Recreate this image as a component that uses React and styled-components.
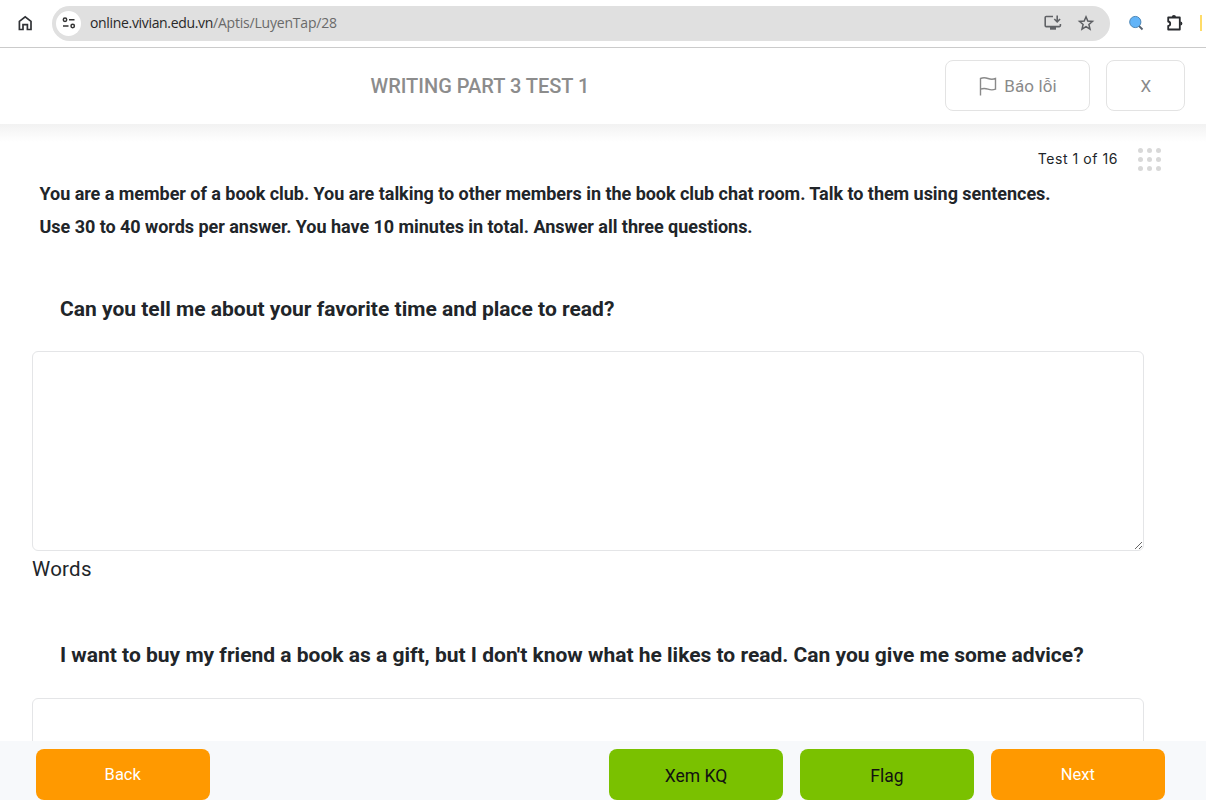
import React from "react";
import styled, { createGlobalStyle } from "styled-components";

const GlobalStyle = createGlobalStyle`
  * {
    box-sizing: border-box;
  }

  body {
    margin: 0;
    background: #fff;
    color: #212529;
    font-family: Roboto, "Liberation Sans", sans-serif;
    overflow: hidden;
  }
`;

const Page = styled.div`
  display: flex;
  flex-direction: column;
  height: 800px;
  overflow: hidden;
`;

const BrowserBar = styled.div`
  display: flex;
  align-items: center;
  flex: none;
  height: 48px;
  padding: 0 0 1px 16px;
  border-bottom: 1px solid #cbcbcb;
`;

const AddressBar = styled.div`
  display: flex;
  align-items: center;
  width: 1058px;
  height: 35px;
  margin-left: 18px;
  padding: 0 15px 0 4px;
  border-radius: 18px;
  background: #e0e0e0;
`;

const SiteInfo = styled.div`
  display: flex;
  align-items: center;
  justify-content: center;
  width: 25px;
  height: 25px;
  border-radius: 50%;
  background: #fff;
`;

const Url = styled.div`
  flex: 1;
  margin-left: 9px;
  color: #6a6a6a;
  font-family: "Open Sans", "Noto Sans", sans-serif;
  font-size: 14px;
  line-height: 20px;
  letter-spacing: -0.2px;
`;

const Host = styled.span`
  color: #282828;
  letter-spacing: -0.33px;
`;

const BarIcon = styled.svg`
  flex: none;
  display: block;
  margin-left: ${({ $gap }) => $gap || 0}px;
`;

const Header = styled.header`
  display: flex;
  align-items: center;
  flex: none;
  height: 76px;
  padding: 0 21px 1px 14px;
  background: #fff;
`;

const Title = styled.h1`
  flex: 1;
  margin: 0;
  padding-left: 1px;
  color: #8c8c8c;
  font-size: 20px;
  font-weight: 500;
  line-height: 24px;
  text-align: center;
`;

const OutlineButton = styled.button`
  display: flex;
  align-items: center;
  justify-content: center;
  gap: 7px;
  width: ${({ $width }) => $width}px;
  height: 51px;
  margin-left: ${({ $gap }) => $gap || 0}px;
  padding: 1px 0 0 1px;
  border: 1px solid #e3e3e3;
  border-radius: 8px;
  background: #fff;
  color: #8a8a8a;
  font-family: Roboto, sans-serif;
  font-size: 17px;
  letter-spacing: 0.1px;
`;

const Content = styled.main`
  flex: 1;
  min-height: 0;
  padding: 21px 40px 0 32px;
  overflow: hidden;
  background: linear-gradient(#f2f2f2, #fff 18px);
`;

const Progress = styled.div`
  display: flex;
  align-items: center;
  justify-content: flex-end;
  gap: 20px;
  height: 29px;
  padding-right: 5px;
`;

const ProgressText = styled.span`
  padding-bottom: 2px;
  font-family: Inter, sans-serif;
  font-size: 14px;
  letter-spacing: 0.55px;
`;

const Dots = styled.div`
  display: grid;
  grid-template-columns: repeat(3, 5px);
  gap: 4px;
`;

const Dot = styled.i`
  width: 5px;
  height: 5px;
  border-radius: 50%;
  background: #d8d8d8;
`;

const Instructions = styled.div`
  height: 66px;
  margin: 3px 0 0 7.5px;
  font-size: 18px;
  font-weight: 700;
  line-height: 33px;
  letter-spacing: -0.037px;
  white-space: nowrap;
`;

const Line = styled.div``;

const Question = styled.h2`
  height: 30px;
  margin: ${({ $top }) => $top}px 0 ${({ $bottom }) => $bottom}px 28px;
  font-size: 21px;
  font-weight: 700;
  line-height: 30px;
  white-space: nowrap;
`;

const Answer = styled.textarea`
  display: block;
  width: 1112px;
  height: 199.5px;
  border: 1px solid #e4e5e7;
  border-radius: 6px;
  background: #fff;
  outline: none;
  resize: vertical;
`;

const WordCount = styled.div`
  height: 36px;
  font-size: 20.5px;
  line-height: 36px;
  letter-spacing: 0.25px;
`;

const Footer = styled.footer`
  display: flex;
  flex: none;
  gap: 16.4px;
  height: 59px;
  padding: 8px 41px 0 35.5px;
  background: #f7f9fb;
`;

const FooterButton = styled.button`
  width: 174.5px;
  height: 51px;
  padding: ${({ $green }) => ($green ? "2px 0 0" : "0")};
  border: 0;
  border-radius: 8px;
  background: ${({ $green }) => ($green ? "#7ac100" : "#ff9900")};
  color: ${({ $green }) => ($green ? "#111" : "#fff")};
  font-family: Roboto, sans-serif;
  font-size: ${({ $green }) => ($green ? 17.5 : 16.5)}px;

  &:first-child {
    margin-right: auto;
  }
`;

const questions = [
  { text: "Can you tell me about your favorite time and place to read?", top: 51, bottom: 27, showCount: true },
  {
    text: "I want to buy my friend a book as a gift, but I don't know what he likes to read. Can you give me some advice?",
    top: 53,
    bottom: 28,
  },
];

const HomeIcon = () => (
  <BarIcon width="18" height="18" viewBox="0 0 18 18" fill="none" stroke="#303236" strokeWidth="1.7">
    <path d="M3.4 7.3 9.2 2.8 15 7.3v8.2h-3.6v-4.8H7v4.8H3.4z" />
  </BarIcon>
);

const TuneIcon = () => (
  <svg width="14" height="12" viewBox="0 0 14 12" fill="none" stroke="#333" strokeWidth="1.5">
    <circle cx="3" cy="2.8" r="1.7" />
    <path d="M7 2.8h5.5M1 9h5.5" />
    <circle cx="10.7" cy="9" r="1.7" />
  </svg>
);

const InstallIcon = () => (
  <BarIcon width="18" height="16" viewBox="0 0 18 16" fill="none" stroke="#606266" strokeWidth="1.6">
    <path d="M9 1.5H2.2Q1.2 1.5 1.2 2.5v8Q1.2 11.6 2.2 11.6h13.2q1 0 1-1V9" />
    <path d="M13.2.5v6M10.3 4l2.9 2.8L16.1 4" />
    <path d="M6 13.2h6" strokeWidth="3" />
  </BarIcon>
);

const StarIcon = () => (
  <BarIcon $gap={15} width="18" height="18" viewBox="0 0 18 18" fill="none" stroke="#5c5e62" strokeWidth="1.5">
    <path d="m9 2.8 1.8 4.2 4.7.4-3.6 3.1 1.1 4.7L9 12.7l-4 2.5 1.1-4.7-3.6-3.1L7.2 7z" />
  </BarIcon>
);

const SearchIcon = () => (
  <BarIcon $gap={18} width="16" height="16" viewBox="0 0 16 16">
    <path d="m10.5 10.5 4 4" stroke="#555f6c" strokeWidth="1.8" />
    <circle cx="7.3" cy="7" r="5.6" fill="#62b4f8" stroke="#4d87b7" />
  </BarIcon>
);

const PuzzleIcon = () => (
  <BarIcon $gap={21} width="20" height="20" viewBox="0 0 20 20">
    <path
      d="M3.2 4.5h11.6v12H3.2v-3.6q2-.2 2-2.2t-2-2.2z"
      fill="none"
      stroke="#292b2f"
      strokeWidth="1.8"
      strokeLinejoin="round"
    />
    <path d="M6.8 4a2.1 2.1 0 0 1 4.2 0zM15.3 8.4a2.1 2.1 0 0 1 0 4.2z" fill="#292b2f" />
  </BarIcon>
);

const ProfileEdge = styled.div`
  width: 2px;
  height: 16px;
  margin-left: 15px;
  background: #ffdc68;
`;

const FlagIcon = () => (
  <svg width="18" height="20" viewBox="0 0 18 20" fill="none" stroke="#8a8a8a" strokeWidth="1.4">
    <path d="M1.5 19.5V2.5q3.5-1.5 7.5 0t7.5 0v10.7q-3.5 1.4-7.5 0t-7.5 0" />
  </svg>
);

const App = () => (
  <>
    <GlobalStyle />
    <Page>
      <BrowserBar>
        <HomeIcon />
        <AddressBar>
          <SiteInfo>
            <TuneIcon />
          </SiteInfo>
          <Url>
            <Host>online.vivian.edu.vn</Host>/Aptis/LuyenTap/28
          </Url>
          <InstallIcon />
          <StarIcon />
        </AddressBar>
        <SearchIcon />
        <PuzzleIcon />
        <ProfileEdge />
      </BrowserBar>
      <Header>
        <Title>WRITING PART 3 TEST 1</Title>
        <OutlineButton $width={145}>
          <FlagIcon />
          Báo lỗi
        </OutlineButton>
        <OutlineButton $width={79} $gap={16}>
          X
        </OutlineButton>
      </Header>
      <Content>
        <Progress>
          <ProgressText>Test 1 of 16</ProgressText>
          <Dots>
            {Array.from({ length: 9 }, (_, i) => (
              <Dot key={i} />
            ))}
          </Dots>
        </Progress>
        <Instructions>
          <Line>
            You are a member of a book club. You are talking to other members in the book club chat room. Talk to them
            using sentences.
          </Line>
          <Line>Use 30 to 40 words per answer. You have 10 minutes in total. Answer all three questions.</Line>
        </Instructions>
        {questions.map(({ text, top, bottom, showCount }) => (
          <React.Fragment key={text}>
            <Question $top={top} $bottom={bottom}>
              {text}
            </Question>
            <Answer />
            {showCount && <WordCount>Words</WordCount>}
          </React.Fragment>
        ))}
      </Content>
      <Footer>
        <FooterButton>Back</FooterButton>
        <FooterButton $green>Xem KQ</FooterButton>
        <FooterButton $green>Flag</FooterButton>
        <FooterButton>Next</FooterButton>
      </Footer>
    </Page>
  </>
);

export default App;
